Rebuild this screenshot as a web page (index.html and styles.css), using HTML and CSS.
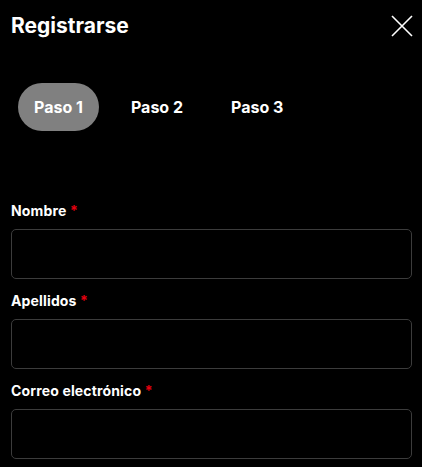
FILE: index.html
```html
<!DOCTYPE html>
<html lang="es">
<head>
<meta charset="utf-8">
<link rel="stylesheet" href="styles.css">
</head>
<body>
<div class="modal">
  <header class="header">
    <h1 class="title">Registrarse</h1>
    <button class="close" aria-label="Cerrar">
      <svg width="22" height="22" viewBox="0 0 22 22"><path d="M1 1 L21 21 M21 1 L1 21" stroke="#fff" stroke-width="1.6" fill="none"/></svg>
    </button>
  </header>
  <nav class="steps">
    <span class="step active">Paso 1</span>
    <span class="step">Paso 2</span>
    <span class="step">Paso 3</span>
  </nav>
  <form class="form">
    <div class="field">
      <label class="label">Nombre <span class="req">*</span></label>
      <div class="input"></div>
    </div>
    <div class="field">
      <label class="label">Apellidos <span class="req">*</span></label>
      <div class="input"></div>
    </div>
    <div class="field">
      <label class="label">Correo electrónico <span class="req">*</span></label>
      <div class="input"></div>
    </div>
  </form>
</div>
</body>
</html>
```
FILE: styles.css
```css
html, body {
  margin: 0;
  background: #000;
  color: #fff;
  font-family: Inter, "Noto Sans", sans-serif;
}
.modal {
  padding: 0 10px 0 11px;
}
.header {
  display: flex;
  justify-content: space-between;
  align-items: center;
  padding-top: 14px;
}
.title {
  margin: 0;
  font-size: 21px;
  font-weight: 700;
  line-height: 24px;
}
.close {
  background: none;
  border: 0;
  padding: 0;
  margin-right: -1px;
  width: 22px;
  height: 22px;
  display: flex;
}
.steps {
  display: flex;
  gap: 16px;
  margin-top: 45px;
  padding-left: 7px;
}
.step {
  height: 48px;
  padding: 0 16px;
  border-radius: 24px;
  display: flex;
  align-items: center;
  font-size: 16px;
  font-weight: 700;
}
.step.active {
  background: #808080;
}
.form {
  margin-top: 70px;
  display: flex;
  flex-direction: column;
  gap: 12px;
}
.field {
  display: flex;
  flex-direction: column;
  gap: 8px;
}
.label {
  font-size: 14px;
  font-weight: 700;
  line-height: 20px;
  letter-spacing: 0.15px;
}
.req {
  color: #e5000f;
}
.input {
  height: 48px;
  border: 1px solid #3c3c3c;
  border-radius: 5px;
}
```
